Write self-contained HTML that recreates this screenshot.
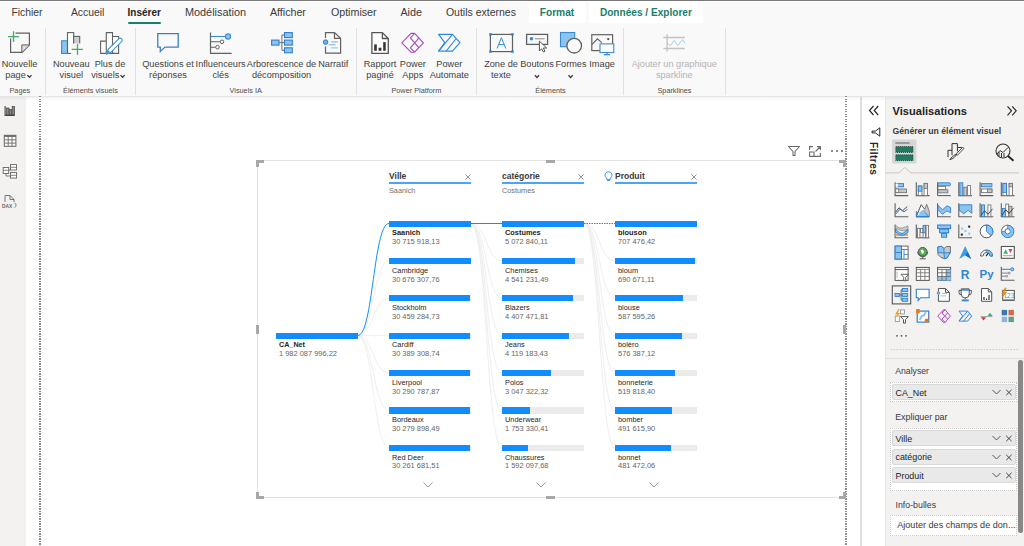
<!DOCTYPE html><html><head><meta charset="utf-8"><style>
html,body{margin:0;padding:0;}
body{width:1024px;height:546px;overflow:hidden;position:relative;background:#f9f9f9;font-family:"Liberation Sans",sans-serif;}
.t{position:absolute;white-space:nowrap;line-height:1;}
.r{position:absolute;}
.s{position:absolute;overflow:visible;}
</style></head><body>

<div class="r" style="left:0px;top:0px;width:1024px;height:1px;background:#7a7a7a;"></div>
<div class="r" style="left:0px;top:1px;width:1024px;height:1px;background:#ffffff;"></div>
<div class="r" style="left:529px;top:2px;width:57px;height:21px;background:#ffffff;"></div>
<div class="r" style="left:589px;top:2px;width:114px;height:21px;background:#ffffff;"></div>
<div class="t" style="left:11.40px;top:7.74px;font-size:10.35px;color:#3b3a39;font-weight:normal;">Fichier</div>
<div class="t" style="left:70.90px;top:7.70px;font-size:10.4px;color:#3b3a39;font-weight:normal;">Accueil</div>
<div class="t" style="left:127.60px;top:8.04px;font-size:10.0px;color:#252423;font-weight:bold;">Insérer</div>
<div class="t" style="left:184.90px;top:6.97px;font-size:10.9px;color:#3b3a39;font-weight:normal;">Modélisation</div>
<div class="t" style="left:269.90px;top:7.14px;font-size:10.7px;color:#3b3a39;font-weight:normal;">Afficher</div>
<div class="t" style="left:330.90px;top:7.14px;font-size:10.7px;color:#3b3a39;font-weight:normal;">Optimiser</div>
<div class="t" style="left:400.40px;top:7.06px;font-size:10.8px;color:#3b3a39;font-weight:normal;">Aide</div>
<div class="t" style="left:445.90px;top:7.31px;font-size:10.5px;color:#3b3a39;font-weight:normal;">Outils externes</div>
<div class="t" style="left:539.70px;top:7.87px;font-size:10.2px;color:#1c7d6b;font-weight:bold;">Format</div>
<div class="t" style="left:599.90px;top:7.95px;font-size:10.1px;color:#1c7d6b;font-weight:bold;">Données / Explorer</div>
<div class="r" style="left:128px;top:22px;width:33px;height:2px;background:#1b7f6b;border-radius:1px;"></div>
<div class="r" style="left:45px;top:28px;width:1px;height:67px;background:#e1e1e1;"></div>
<div class="r" style="left:135px;top:28px;width:1px;height:67px;background:#e1e1e1;"></div>
<div class="r" style="left:356px;top:28px;width:1px;height:67px;background:#e1e1e1;"></div>
<div class="r" style="left:476px;top:28px;width:1px;height:67px;background:#e1e1e1;"></div>
<div class="r" style="left:623px;top:28px;width:1px;height:67px;background:#e1e1e1;"></div>
<div class="r" style="left:725px;top:28px;width:1px;height:67px;background:#e1e1e1;"></div>
<div class="t" style="left:-280.50px;width:600px;text-align:center;top:59.51px;font-size:9.2px;color:#424242;font-weight:normal;">Nouvelle</div>
<div class="t" style="left:-228.70px;width:600px;text-align:center;top:59.51px;font-size:9.2px;color:#424242;font-weight:normal;">Nouveau</div>
<div class="t" style="left:-228.70px;width:600px;text-align:center;top:71.01px;font-size:9.2px;color:#424242;font-weight:normal;">visuel</div>
<div class="t" style="left:-190.00px;width:600px;text-align:center;top:59.51px;font-size:9.2px;color:#424242;font-weight:normal;">Plus de</div>
<div class="t" style="left:-132.00px;width:600px;text-align:center;top:59.51px;font-size:9.2px;color:#424242;font-weight:normal;">Questions et</div>
<div class="t" style="left:-132.00px;width:600px;text-align:center;top:71.01px;font-size:9.2px;color:#424242;font-weight:normal;">réponses</div>
<div class="t" style="left:-79.40px;width:600px;text-align:center;top:59.51px;font-size:9.2px;color:#424242;font-weight:normal;">Influenceurs</div>
<div class="t" style="left:-79.40px;width:600px;text-align:center;top:71.01px;font-size:9.2px;color:#424242;font-weight:normal;">clés</div>
<div class="t" style="left:-18.50px;width:600px;text-align:center;top:59.51px;font-size:9.2px;color:#424242;font-weight:normal;">Arborescence de</div>
<div class="t" style="left:-18.50px;width:600px;text-align:center;top:71.01px;font-size:9.2px;color:#424242;font-weight:normal;">décomposition</div>
<div class="t" style="left:33.30px;width:600px;text-align:center;top:59.51px;font-size:9.2px;color:#424242;font-weight:normal;">Narratif</div>
<div class="t" style="left:80.00px;width:600px;text-align:center;top:59.51px;font-size:9.2px;color:#424242;font-weight:normal;">Rapport</div>
<div class="t" style="left:80.00px;width:600px;text-align:center;top:71.01px;font-size:9.2px;color:#424242;font-weight:normal;">paginé</div>
<div class="t" style="left:112.80px;width:600px;text-align:center;top:59.51px;font-size:9.2px;color:#424242;font-weight:normal;">Power</div>
<div class="t" style="left:112.80px;width:600px;text-align:center;top:71.01px;font-size:9.2px;color:#424242;font-weight:normal;">Apps</div>
<div class="t" style="left:149.30px;width:600px;text-align:center;top:59.51px;font-size:9.2px;color:#424242;font-weight:normal;">Power</div>
<div class="t" style="left:149.30px;width:600px;text-align:center;top:71.01px;font-size:9.2px;color:#424242;font-weight:normal;">Automate</div>
<div class="t" style="left:201.00px;width:600px;text-align:center;top:59.51px;font-size:9.2px;color:#424242;font-weight:normal;">Zone de</div>
<div class="t" style="left:201.00px;width:600px;text-align:center;top:71.01px;font-size:9.2px;color:#424242;font-weight:normal;">texte</div>
<div class="t" style="left:237.00px;width:600px;text-align:center;top:59.51px;font-size:9.2px;color:#424242;font-weight:normal;">Boutons</div>
<div class="t" style="left:271.00px;width:600px;text-align:center;top:59.51px;font-size:9.2px;color:#424242;font-weight:normal;">Formes</div>
<div class="t" style="left:302.10px;width:600px;text-align:center;top:59.51px;font-size:9.2px;color:#424242;font-weight:normal;">Image</div>
<div class="t" style="left:5.30px;top:71.01px;font-size:9.2px;color:#424242;font-weight:normal;">page</div>
<div class="t" style="left:91.20px;top:71.01px;font-size:9.2px;color:#424242;font-weight:normal;">visuels</div>
<div class="t" style="left:374.30px;width:600px;text-align:center;top:59.51px;font-size:9.2px;color:#b3b3b3;font-weight:normal;">Ajouter un graphique</div>
<div class="t" style="left:374.30px;width:600px;text-align:center;top:71.01px;font-size:9.2px;color:#b3b3b3;font-weight:normal;">sparkline</div>
<div class="t" style="left:-280.20px;width:600px;text-align:center;top:87.12px;font-size:7.3px;color:#4d4d4d;font-weight:normal;">Pages</div>
<div class="t" style="left:-209.60px;width:600px;text-align:center;top:87.12px;font-size:7.3px;color:#4d4d4d;font-weight:normal;">Éléments visuels</div>
<div class="t" style="left:-54.30px;width:600px;text-align:center;top:87.12px;font-size:7.3px;color:#4d4d4d;font-weight:normal;">Visuels IA</div>
<div class="t" style="left:116.40px;width:600px;text-align:center;top:87.12px;font-size:7.3px;color:#4d4d4d;font-weight:normal;">Power Platform</div>
<div class="t" style="left:250.50px;width:600px;text-align:center;top:87.12px;font-size:7.3px;color:#4d4d4d;font-weight:normal;">Éléments</div>
<div class="t" style="left:374.50px;width:600px;text-align:center;top:87.12px;font-size:7.3px;color:#4d4d4d;font-weight:normal;">Sparklines</div>
<div class="r" style="left:0px;top:96px;width:26px;height:450px;background:#f3f2f1;"></div>
<div class="r" style="left:26px;top:96px;width:834px;height:450px;background:#ffffff;"></div>
<div class="r" style="left:860px;top:96px;width:2px;height:450px;background:#e1dfdd;"></div>
<div class="r" style="left:862px;top:96px;width:23px;height:450px;background:#ffffff;"></div>
<div class="r" style="left:885px;top:96px;width:139px;height:450px;background:#f3f2f1;"></div>
<div class="r" style="left:885px;top:96px;width:1px;height:450px;background:#e6e5e4;"></div>
<div class="r" style="left:0px;top:96px;width:1024px;height:1px;background:#e6e6e6;"></div>
<div class="r" style="left:0;top:97px;width:1024px;height:4px;background:linear-gradient(rgba(0,0,0,0.045),rgba(0,0,0,0));"></div>
<div class="r" style="left:39px;top:96px;width:2px;height:450px;background:repeating-linear-gradient(to bottom,#8c8c8c 0,#8c8c8c 1.1px,#ffffff 1.1px,#ffffff 2.5px);"></div>
<div class="r" style="left:845px;top:96px;width:2px;height:450px;background:repeating-linear-gradient(to bottom,#8c8c8c 0,#8c8c8c 1.1px,#ffffff 1.1px,#ffffff 2.5px);"></div>
<div class="r" style="left:257px;top:160px;width:589px;height:1px;background:#e3e3e3;"></div>
<div class="r" style="left:257px;top:497px;width:589px;height:1px;background:#e3e3e3;"></div>
<div class="r" style="left:257px;top:160px;width:1px;height:338px;background:#e3e3e3;"></div>
<div class="r" style="left:256px;top:160px;width:8px;height:3px;background:#a8a8a8;"></div>
<div class="r" style="left:256px;top:160px;width:3px;height:7px;background:#a8a8a8;"></div>
<div class="r" style="left:256px;top:496px;width:8px;height:3px;background:#a8a8a8;"></div>
<div class="r" style="left:256px;top:492px;width:3px;height:7px;background:#a8a8a8;"></div>
<div class="r" style="left:839px;top:496px;width:7px;height:3px;background:#a8a8a8;"></div>
<div class="r" style="left:843px;top:492px;width:3px;height:7px;background:#a8a8a8;"></div>
<div class="r" style="left:839px;top:160px;width:7px;height:3px;background:#a8a8a8;"></div>
<div class="r" style="left:843px;top:160px;width:3px;height:7px;background:#a8a8a8;"></div>
<div class="r" style="left:546px;top:160px;width:9px;height:3px;background:#a8a8a8;"></div>
<div class="r" style="left:546px;top:496px;width:9px;height:3px;background:#a8a8a8;"></div>
<div class="r" style="left:256px;top:325px;width:3px;height:9px;background:#a8a8a8;"></div>
<div class="r" style="left:843px;top:325px;width:3px;height:9px;background:#a8a8a8;"></div>
<svg class="s" style="left:787px;top:145px;" width="14" height="12" viewBox="0 0 14 12"><path d="M1.5 1.5 H12.5 L8 6.5 V10.5 H6 V6.5 Z" fill="none" stroke="#6b6b6b" stroke-width="1.1" stroke-linejoin="round"/></svg>
<svg class="s" style="left:809px;top:146px;" width="13" height="11" viewBox="0 0 13 11"><path d="M0.6 4 V0.6 H4 M8 0.6 H11.4 V4 M11.4 7 V10.4 H0.6 V6 H5 V10.4 M6.5 5.5 L11 1" fill="none" stroke="#6b6b6b" stroke-width="1.1"/></svg>
<div class="r" style="left:831px;top:150px;width:1.6px;height:1.6px;background:#666;border-radius:1px;"></div>
<div class="r" style="left:836px;top:150px;width:1.6px;height:1.6px;background:#666;border-radius:1px;"></div>
<div class="r" style="left:841px;top:150px;width:1.6px;height:1.6px;background:#666;border-radius:1px;"></div>
<div class="t" style="left:389.00px;top:171.80px;font-size:8.5px;color:#3b3a39;font-weight:bold;">Ville</div>
<div class="r" style="left:389px;top:182px;width:82px;height:2px;background:#4ba4f5;"></div>
<svg class="s" style="left:465px;top:173.5px;" width="6" height="6" viewBox="0 0 6 6"><path d="M0.4 0.4 L5.6 5.6 M5.6 0.4 L0.4 5.6" stroke="#8a8a8a" stroke-width="0.9"/></svg>
<div class="t" style="left:389.00px;top:186.52px;font-size:7.3px;color:#707070;font-weight:normal;">Saanich</div>
<div class="t" style="left:502.00px;top:171.80px;font-size:8.5px;color:#3b3a39;font-weight:bold;">catégorie</div>
<div class="r" style="left:502px;top:182px;width:82px;height:2px;background:#4ba4f5;"></div>
<svg class="s" style="left:578px;top:173.5px;" width="6" height="6" viewBox="0 0 6 6"><path d="M0.4 0.4 L5.6 5.6 M5.6 0.4 L0.4 5.6" stroke="#8a8a8a" stroke-width="0.9"/></svg>
<div class="t" style="left:502.00px;top:186.52px;font-size:7.3px;color:#707070;font-weight:normal;">Costumes</div>
<div class="t" style="left:615.00px;top:171.80px;font-size:8.5px;color:#3b3a39;font-weight:bold;">Produit</div>
<div class="r" style="left:615px;top:182px;width:82px;height:2px;background:#4ba4f5;"></div>
<svg class="s" style="left:691px;top:173.5px;" width="6" height="6" viewBox="0 0 6 6"><path d="M0.4 0.4 L5.6 5.6 M5.6 0.4 L0.4 5.6" stroke="#8a8a8a" stroke-width="0.9"/></svg>
<svg class="s" style="left:604px;top:171px;" width="9" height="10" viewBox="0 0 9 10"><path d="M4.5 0.8 C2.3 0.8 1 2.4 1 4.2 C1 5.6 2 6.4 2.6 7.2 V8.4 H6.4 V7.2 C7 6.4 8 5.6 8 4.2 C8 2.4 6.7 0.8 4.5 0.8 Z M3 9.4 H6" fill="none" stroke="#3a96f0" stroke-width="1"/></svg>
<svg class="s" style="left:0;top:0" width="1024" height="546" viewBox="0 0 1024 546"><path d="M357.6 335.6 C373.3 335.6 373.3 260.88 389 260.88" fill="none" stroke="#efefef" stroke-width="1"/><path d="M471 223.5 C486.5 223.5 486.5 260.88 502 260.88" fill="none" stroke="#efefef" stroke-width="1"/><path d="M584 223.5 C599.5 223.5 599.5 260.88 615 260.88" fill="none" stroke="#efefef" stroke-width="1"/><path d="M357.6 335.6 C373.3 335.6 373.3 298.26 389 298.26" fill="none" stroke="#efefef" stroke-width="1"/><path d="M471 223.5 C486.5 223.5 486.5 298.26 502 298.26" fill="none" stroke="#efefef" stroke-width="1"/><path d="M584 223.5 C599.5 223.5 599.5 298.26 615 298.26" fill="none" stroke="#efefef" stroke-width="1"/><path d="M357.6 335.6 C373.3 335.6 373.3 335.64 389 335.64" fill="none" stroke="#efefef" stroke-width="1"/><path d="M471 223.5 C486.5 223.5 486.5 335.64 502 335.64" fill="none" stroke="#efefef" stroke-width="1"/><path d="M584 223.5 C599.5 223.5 599.5 335.64 615 335.64" fill="none" stroke="#efefef" stroke-width="1"/><path d="M357.6 335.6 C373.3 335.6 373.3 373.02 389 373.02" fill="none" stroke="#efefef" stroke-width="1"/><path d="M471 223.5 C486.5 223.5 486.5 373.02 502 373.02" fill="none" stroke="#efefef" stroke-width="1"/><path d="M584 223.5 C599.5 223.5 599.5 373.02 615 373.02" fill="none" stroke="#efefef" stroke-width="1"/><path d="M357.6 335.6 C373.3 335.6 373.3 410.4 389 410.4" fill="none" stroke="#efefef" stroke-width="1"/><path d="M471 223.5 C486.5 223.5 486.5 410.4 502 410.4" fill="none" stroke="#efefef" stroke-width="1"/><path d="M584 223.5 C599.5 223.5 599.5 410.4 615 410.4" fill="none" stroke="#efefef" stroke-width="1"/><path d="M357.6 335.6 C373.3 335.6 373.3 447.78000000000003 389 447.78000000000003" fill="none" stroke="#efefef" stroke-width="1"/><path d="M471 223.5 C486.5 223.5 486.5 447.78000000000003 502 447.78000000000003" fill="none" stroke="#efefef" stroke-width="1"/><path d="M584 223.5 C599.5 223.5 599.5 447.78000000000003 615 447.78000000000003" fill="none" stroke="#efefef" stroke-width="1"/><path d="M357.6 335.6 C373.3 335.6 373.3 223.5 389 223.5" fill="none" stroke="#118dff" stroke-width="1"/><path d="M471 223.5 H502" stroke="#118dff" stroke-width="1"/><path d="M584 223.5 H615" stroke="#118dff" stroke-width="1" stroke-dasharray="1.5 1"/></svg>
<div class="r" style="left:275.5px;top:332.6px;width:82px;height:6.3px;background:#118dff;"></div>
<div class="t" style="left:279.00px;top:341.21px;font-size:7.2px;color:#252423;font-weight:bold;">CA_Net</div>
<div class="t" style="left:279.00px;top:349.89px;font-size:7.45px;color:#666666;font-weight:normal;">1 982 087 996,22</div>
<div class="r" style="left:389px;top:220.5px;width:82px;height:6.2px;background:#ebebeb;"></div>
<div class="r" style="left:389px;top:220.5px;width:82.0px;height:6.2px;background:#118dff;"></div>
<div class="t" style="left:392.00px;top:229.24px;font-size:7.4px;color:#252423;font-weight:bold;">Saanich</div>
<div class="t" style="left:392.00px;top:238.19px;font-size:7.45px;color:#666666;font-weight:normal;">30 715 918,13</div>
<div class="r" style="left:389px;top:257.88px;width:82px;height:6.2px;background:#ebebeb;"></div>
<div class="r" style="left:389px;top:257.88px;width:81.9px;height:6.2px;background:#118dff;"></div>
<div class="t" style="left:392.00px;top:266.62px;font-size:7.4px;color:#252423;font-weight:normal;">Cambridge</div>
<div class="t" style="left:392.00px;top:275.57px;font-size:7.45px;color:#666666;font-weight:normal;">30 676 307,76</div>
<div class="r" style="left:389px;top:295.26px;width:82px;height:6.2px;background:#ebebeb;"></div>
<div class="r" style="left:389px;top:295.26px;width:81.3px;height:6.2px;background:#118dff;"></div>
<div class="t" style="left:392.00px;top:304.00px;font-size:7.4px;color:#252423;font-weight:normal;">Stockholm</div>
<div class="t" style="left:392.00px;top:312.95px;font-size:7.45px;color:#666666;font-weight:normal;">30 459 284,73</div>
<div class="r" style="left:389px;top:332.64px;width:82px;height:6.2px;background:#ebebeb;"></div>
<div class="r" style="left:389px;top:332.64px;width:81.1px;height:6.2px;background:#118dff;"></div>
<div class="t" style="left:392.00px;top:341.38px;font-size:7.4px;color:#252423;font-weight:normal;">Cardiff</div>
<div class="t" style="left:392.00px;top:350.33px;font-size:7.45px;color:#666666;font-weight:normal;">30 389 308,74</div>
<div class="r" style="left:389px;top:370.02px;width:82px;height:6.2px;background:#ebebeb;"></div>
<div class="r" style="left:389px;top:370.02px;width:80.9px;height:6.2px;background:#118dff;"></div>
<div class="t" style="left:392.00px;top:378.76px;font-size:7.4px;color:#252423;font-weight:normal;">Liverpool</div>
<div class="t" style="left:392.00px;top:387.71px;font-size:7.45px;color:#666666;font-weight:normal;">30 290 787,87</div>
<div class="r" style="left:389px;top:407.4px;width:82px;height:6.2px;background:#ebebeb;"></div>
<div class="r" style="left:389px;top:407.4px;width:80.8px;height:6.2px;background:#118dff;"></div>
<div class="t" style="left:392.00px;top:416.14px;font-size:7.4px;color:#252423;font-weight:normal;">Bordeaux</div>
<div class="t" style="left:392.00px;top:425.09px;font-size:7.45px;color:#666666;font-weight:normal;">30 279 898,49</div>
<div class="r" style="left:389px;top:444.78000000000003px;width:82px;height:6.2px;background:#ebebeb;"></div>
<div class="r" style="left:389px;top:444.78000000000003px;width:80.8px;height:6.2px;background:#118dff;"></div>
<div class="t" style="left:392.00px;top:453.52px;font-size:7.4px;color:#252423;font-weight:normal;">Red Deer</div>
<div class="t" style="left:392.00px;top:462.47px;font-size:7.45px;color:#666666;font-weight:normal;">30 261 681,51</div>
<div class="r" style="left:502px;top:220.5px;width:82px;height:6.2px;background:#ebebeb;"></div>
<div class="r" style="left:502px;top:220.5px;width:82.0px;height:6.2px;background:#118dff;"></div>
<div class="t" style="left:505.00px;top:229.24px;font-size:7.4px;color:#252423;font-weight:bold;">Costumes</div>
<div class="t" style="left:505.00px;top:238.19px;font-size:7.45px;color:#666666;font-weight:normal;">5 072 840,11</div>
<div class="r" style="left:502px;top:257.88px;width:82px;height:6.2px;background:#ebebeb;"></div>
<div class="r" style="left:502px;top:257.88px;width:73.4px;height:6.2px;background:#118dff;"></div>
<div class="t" style="left:505.00px;top:266.62px;font-size:7.4px;color:#252423;font-weight:normal;">Chemises</div>
<div class="t" style="left:505.00px;top:275.57px;font-size:7.45px;color:#666666;font-weight:normal;">4 541 231,49</div>
<div class="r" style="left:502px;top:295.26px;width:82px;height:6.2px;background:#ebebeb;"></div>
<div class="r" style="left:502px;top:295.26px;width:71.3px;height:6.2px;background:#118dff;"></div>
<div class="t" style="left:505.00px;top:304.00px;font-size:7.4px;color:#252423;font-weight:normal;">Blazers</div>
<div class="t" style="left:505.00px;top:312.95px;font-size:7.45px;color:#666666;font-weight:normal;">4 407 471,81</div>
<div class="r" style="left:502px;top:332.64px;width:82px;height:6.2px;background:#ebebeb;"></div>
<div class="r" style="left:502px;top:332.64px;width:66.6px;height:6.2px;background:#118dff;"></div>
<div class="t" style="left:505.00px;top:341.38px;font-size:7.4px;color:#252423;font-weight:normal;">Jeans</div>
<div class="t" style="left:505.00px;top:350.33px;font-size:7.45px;color:#666666;font-weight:normal;">4 119 183,43</div>
<div class="r" style="left:502px;top:370.02px;width:82px;height:6.2px;background:#ebebeb;"></div>
<div class="r" style="left:502px;top:370.02px;width:49.3px;height:6.2px;background:#118dff;"></div>
<div class="t" style="left:505.00px;top:378.76px;font-size:7.4px;color:#252423;font-weight:normal;">Polos</div>
<div class="t" style="left:505.00px;top:387.71px;font-size:7.45px;color:#666666;font-weight:normal;">3 047 322,32</div>
<div class="r" style="left:502px;top:407.4px;width:82px;height:6.2px;background:#ebebeb;"></div>
<div class="r" style="left:502px;top:407.4px;width:28.3px;height:6.2px;background:#118dff;"></div>
<div class="t" style="left:505.00px;top:416.14px;font-size:7.4px;color:#252423;font-weight:normal;">Underwear</div>
<div class="t" style="left:505.00px;top:425.09px;font-size:7.45px;color:#666666;font-weight:normal;">1 753 330,41</div>
<div class="r" style="left:502px;top:444.78000000000003px;width:82px;height:6.2px;background:#ebebeb;"></div>
<div class="r" style="left:502px;top:444.78000000000003px;width:25.7px;height:6.2px;background:#118dff;"></div>
<div class="t" style="left:505.00px;top:453.52px;font-size:7.4px;color:#252423;font-weight:normal;">Chaussures</div>
<div class="t" style="left:505.00px;top:462.47px;font-size:7.45px;color:#666666;font-weight:normal;">1 592 097,68</div>
<div class="r" style="left:615px;top:220.5px;width:82px;height:6.2px;background:#ebebeb;"></div>
<div class="r" style="left:615px;top:220.5px;width:82.0px;height:6.2px;background:#118dff;"></div>
<div class="t" style="left:618.00px;top:229.24px;font-size:7.4px;color:#252423;font-weight:bold;">blouson</div>
<div class="t" style="left:618.00px;top:238.19px;font-size:7.45px;color:#666666;font-weight:normal;">707 476,42</div>
<div class="r" style="left:615px;top:257.88px;width:82px;height:6.2px;background:#ebebeb;"></div>
<div class="r" style="left:615px;top:257.88px;width:80.0px;height:6.2px;background:#118dff;"></div>
<div class="t" style="left:618.00px;top:266.62px;font-size:7.4px;color:#252423;font-weight:normal;">bloum</div>
<div class="t" style="left:618.00px;top:275.57px;font-size:7.45px;color:#666666;font-weight:normal;">690 671,11</div>
<div class="r" style="left:615px;top:295.26px;width:82px;height:6.2px;background:#ebebeb;"></div>
<div class="r" style="left:615px;top:295.26px;width:68.1px;height:6.2px;background:#118dff;"></div>
<div class="t" style="left:618.00px;top:304.00px;font-size:7.4px;color:#252423;font-weight:normal;">blouse</div>
<div class="t" style="left:618.00px;top:312.95px;font-size:7.45px;color:#666666;font-weight:normal;">587 595,26</div>
<div class="r" style="left:615px;top:332.64px;width:82px;height:6.2px;background:#ebebeb;"></div>
<div class="r" style="left:615px;top:332.64px;width:66.8px;height:6.2px;background:#118dff;"></div>
<div class="t" style="left:618.00px;top:341.38px;font-size:7.4px;color:#252423;font-weight:normal;">boléro</div>
<div class="t" style="left:618.00px;top:350.33px;font-size:7.45px;color:#666666;font-weight:normal;">576 387,12</div>
<div class="r" style="left:615px;top:370.02px;width:82px;height:6.2px;background:#ebebeb;"></div>
<div class="r" style="left:615px;top:370.02px;width:60.3px;height:6.2px;background:#118dff;"></div>
<div class="t" style="left:618.00px;top:378.76px;font-size:7.4px;color:#252423;font-weight:normal;">bonneterie</div>
<div class="t" style="left:618.00px;top:387.71px;font-size:7.45px;color:#666666;font-weight:normal;">519 818,40</div>
<div class="r" style="left:615px;top:407.4px;width:82px;height:6.2px;background:#ebebeb;"></div>
<div class="r" style="left:615px;top:407.4px;width:57.0px;height:6.2px;background:#118dff;"></div>
<div class="t" style="left:618.00px;top:416.14px;font-size:7.4px;color:#252423;font-weight:normal;">bomber</div>
<div class="t" style="left:618.00px;top:425.09px;font-size:7.45px;color:#666666;font-weight:normal;">491 615,90</div>
<div class="r" style="left:615px;top:444.78000000000003px;width:82px;height:6.2px;background:#ebebeb;"></div>
<div class="r" style="left:615px;top:444.78000000000003px;width:55.8px;height:6.2px;background:#118dff;"></div>
<div class="t" style="left:618.00px;top:453.52px;font-size:7.4px;color:#252423;font-weight:normal;">bonnet</div>
<div class="t" style="left:618.00px;top:462.47px;font-size:7.45px;color:#666666;font-weight:normal;">481 472,06</div>
<svg class="s" style="left:422.5px;top:481.5px;" width="10" height="6" viewBox="0 0 10 6"><path d="M0.5 0.5 L5 5 L9.5 0.5" fill="none" stroke="#999" stroke-width="1"/></svg>
<svg class="s" style="left:535.5px;top:481.5px;" width="10" height="6" viewBox="0 0 10 6"><path d="M0.5 0.5 L5 5 L9.5 0.5" fill="none" stroke="#999" stroke-width="1"/></svg>
<svg class="s" style="left:648.5px;top:481.5px;" width="10" height="6" viewBox="0 0 10 6"><path d="M0.5 0.5 L5 5 L9.5 0.5" fill="none" stroke="#999" stroke-width="1"/></svg>
<svg class="s" style="left:0;top:0" width="1024" height="546" viewBox="0 0 1024 546"><path d="M15.5 33.2 H29.4 V44.9 L22.2 52.4 H10.6 V38.5" fill="none" stroke="#616161" stroke-width="1.2"/><path d="M21.8 52 V44.9 H29.2" fill="#dcdcdc" stroke="#616161" stroke-width="1"/><path d="M8.1 36.7 H19.1 M13.5 31.3 V42.1" stroke="#47a865" stroke-width="1.3"/><rect x="61.6" y="40.8" width="5.9" height="12.6" fill="#8cc4f0" stroke="#3a8ad6" stroke-width="1.1"/><rect x="67.5" y="32.6" width="6.2" height="20.8" fill="#fff" stroke="#616161" stroke-width="1.1"/><rect x="73.7" y="36.4" width="6" height="17" fill="#cfcfcf" stroke="#616161" stroke-width="1.1"/><rect x="71" y="43.5" width="12.5" height="11.5" fill="#f9f9f9"/><path d="M71.6 49.3 H82.9 M77.5 43.9 V54.7" stroke="#47a865" stroke-width="1.3"/><path d="M100.6 53.4 V41.1 H106.3 V32.6 H112.5 V36.5 H118.6 V53.4 Z M106.3 41.1 V53.4 M112.5 36.5 V53.4" fill="#fff" stroke="#616161" stroke-width="1.1"/><path d="M106.5 54.3 L108 49.5 L118.8 38.8 A1.9 1.9 0 0 1 121.6 41.6 L110.8 52.3 Z" fill="#fff" stroke="#3a9ad9" stroke-width="1.1" stroke-linejoin="round"/><path d="M106.6 54.2 L108.2 50.2 L110.3 52.3 Z" fill="#3a9ad9"/><path d="M157.8 33.6 H178.2 V47.1 H165 L160.3 51.6 V47.1 H157.8 Z" fill="none" stroke="#3d7fc1" stroke-width="1.3" stroke-linejoin="miter"/><path d="M210.5 32.4 V53.4 H231.6" fill="none" stroke="#616161" stroke-width="1.2"/><path d="M210.5 36.5 H225.4" stroke="#3a8ad6" stroke-width="1.1"/><circle cx="228" cy="36.5" r="2.6" fill="#8cc4f0" stroke="#3a8ad6" stroke-width="1.1"/><path d="M210.5 41.8 H220.2 M210.5 47.2 H215.7" stroke="#616161" stroke-width="1.1"/><circle cx="222" cy="41.8" r="1.8" fill="#fff" stroke="#616161" stroke-width="1"/><circle cx="217.5" cy="47.2" r="1.8" fill="#fff" stroke="#616161" stroke-width="1"/><path d="M279.1 42.6 H284 M281.9 35 V50.3 M281.9 35 H284 M281.9 50.3 H284" fill="none" stroke="#707070" stroke-width="1"/><rect x="271.6" y="40.1" width="7.4" height="5" fill="#8cc4f0" stroke="#2f7fcf" stroke-width="1.1"/><rect x="284.5" y="32.6" width="7.8" height="5" fill="#8cc4f0" stroke="#2f7fcf" stroke-width="1.1"/><rect x="284.5" y="40.1" width="7.8" height="5" fill="#8cc4f0" stroke="#2f7fcf" stroke-width="1.1"/><rect x="284.5" y="47.8" width="7.8" height="5" fill="#8cc4f0" stroke="#2f7fcf" stroke-width="1.1"/><path d="M325.5 38 V32.6 H334.5 L340.6 38.3 V53.1 H325.5 V46.5 M334.5 32.6 V38.3 H340.6" fill="none" stroke="#616161" stroke-width="1.2"/><circle cx="325.6" cy="42.1" r="2.3" fill="#6aaee6" stroke="#2f7fcf" stroke-width="1"/><path d="M331.1 41.7 H337.8 M328.6 44.8 H335.5 M331.1 47.9 H337.8" stroke="#9ccbed" stroke-width="1.4"/><path d="M371.9 32.6 H382.4 L388.3 38.5 V53.4 H371.9 Z M382.4 32.6 V38.5 H388.3" fill="#fff" stroke="#555" stroke-width="1.3" stroke-linejoin="round"/><rect x="374.2" y="44.4" width="2.6" height="6.4" fill="#333"/><rect x="378.6" y="47.7" width="2.8" height="3.1" fill="#333"/><rect x="383.2" y="42.1" width="2.5" height="8.7" fill="#333"/><path d="M411 33.4 L401.8 42.8 L411 52.2 H414.6 L423.4 42.8 L414.6 33.4 Z" fill="none" stroke="#a54bbf" stroke-width="1.1" stroke-linejoin="round"/><path d="M414.6 33.4 L410.4 37.8 L419 47.8 M414.6 52.2 L410.4 47.8 L419 37.8" fill="none" stroke="#a54bbf" stroke-width="1.1" stroke-linejoin="round"/><path d="M438.6 34.4 H452.5 L459.9 42.7 L452.5 51.1 H438.6 L444.8 42.7 Z" fill="none" stroke="#2f8be0" stroke-width="1.2" stroke-linejoin="round"/><path d="M452.5 34.4 L438.6 51.1 M456.2 38.5 L446.2 51.1" stroke="#2f8be0" stroke-width="1.1"/><rect x="490.4" y="34.4" width="22.1" height="17.2" fill="none" stroke="#616161" stroke-width="1.2"/><rect x="489.2" y="33.199999999999996" width="2.4" height="2.4" fill="#1e88e5"/><rect x="511.3" y="33.199999999999996" width="2.4" height="2.4" fill="#1e88e5"/><rect x="489.2" y="50.4" width="2.4" height="2.4" fill="#1e88e5"/><rect x="511.3" y="50.4" width="2.4" height="2.4" fill="#1e88e5"/><path d="M497.1 48.5 L501.4 37.7 L505.8 48.5 M498.7 44.6 H504.2" fill="none" stroke="#2f8be0" stroke-width="1"/><rect x="526.6" y="34.4" width="21" height="10" fill="none" stroke="#616161" stroke-width="1.3"/><circle cx="531.5" cy="38.8" r="1.8" fill="#2f8be0"/><path d="M535 38.8 H544.6" stroke="#888" stroke-width="1"/><path d="M539.4 41.1 V51 L541.6 48.7 L543.4 52 L545 51.2 L543.3 48 H546.7 Z" fill="#fff" stroke="#555" stroke-width="1" stroke-linejoin="round"/><rect x="560.5" y="32.5" width="14.2" height="14.2" fill="#8cc4f0" stroke="#3a8ad6" stroke-width="1.1"/><circle cx="574.2" cy="45.7" r="7.3" fill="#fafafa" stroke="#616161" stroke-width="1.3"/><rect x="591.8" y="34.7" width="20.8" height="15.9" fill="none" stroke="#616161" stroke-width="1.2"/><path d="M591.8 44.7 L597.4 38.8 L601.8 42.6" fill="none" stroke="#616161" stroke-width="1.2"/><circle cx="608.2" cy="39.1" r="1.1" fill="#444"/><rect x="600" y="43.9" width="13.8" height="8.6" fill="#fff" stroke="#3a8ad6" stroke-width="1.1"/><path d="M607 52.5 V54.4 M604 54.6 H610" stroke="#3a8ad6" stroke-width="1.1"/><path d="M667.1 34.2 V51.6 M663.4 37.5 H684.9 M663.4 48.5 H684.9" stroke="#c2c2c2" stroke-width="1.3"/><path d="M667.5 43.2 L670.3 45.7 L674.1 40.3 L677.8 45.7 L682.5 39.6 L685 43.5" fill="none" stroke="#a9cfe8" stroke-width="1"/><path d="M27.299999999999997 75.10000000000001 L29.4 77.30000000000001 L31.5 75.10000000000001" fill="none" stroke="#3b3b3b" stroke-width="1.3"/><path d="M120.5 75.10000000000001 L122.6 77.30000000000001 L124.69999999999999 75.10000000000001" fill="none" stroke="#3b3b3b" stroke-width="1.3"/><path d="M534.9 75.3 L537 77.5 L539.1 75.3" fill="none" stroke="#3b3b3b" stroke-width="1.3"/><path d="M568.5 75.3 L570.6 77.5 L572.7 75.3" fill="none" stroke="#3b3b3b" stroke-width="1.3"/><path d="M5.1 106 V115.4 H14.8" fill="none" stroke="#444" stroke-width="1.1"/><rect x="6.6" y="108" width="2.4" height="6.8" fill="#888" stroke="#444" stroke-width="0.7"/><rect x="9.6" y="109.6" width="2.2" height="5.2" fill="#888" stroke="#444" stroke-width="0.7"/><rect x="12.2" y="106.5" width="2.4" height="8.3" fill="#888" stroke="#444" stroke-width="0.7"/><rect x="4.3" y="135.3" width="11.6" height="11" fill="#fff" stroke="#666" stroke-width="1"/><rect x="4.3" y="135.3" width="11.6" height="1.6" fill="#666"/><path d="M8.2 136 V146.3 M12 136 V146.3 M4.3 139.8 H15.9 M4.3 143.1 H15.9" stroke="#666" stroke-width="0.9"/><rect x="3.2" y="167.5" width="5.5" height="6" fill="#fff" stroke="#666" stroke-width="0.9"/><rect x="10.5" y="164.6" width="6" height="5.4" fill="#fff" stroke="#666" stroke-width="0.9"/><rect x="10.5" y="172.5" width="6" height="5.6" fill="#fff" stroke="#666" stroke-width="0.9"/><path d="M8.7 170 H10.5 M6 173.5 V176 H10.5 M3.2 170.3 H8.7 M10.5 167.3 H16.5 M10.5 175.3 H16.5" fill="none" stroke="#666" stroke-width="0.8"/><path d="M5 202 V195.5 H10 L14 199.5 V202 M10 195.5 V199.5 H14" fill="none" stroke="#666" stroke-width="0.9"/><text x="2" y="207.5" font-family="Liberation Sans" font-size="4.8" fill="#666" font-weight="bold">DAX</text><path d="M14.5 203 A2.4 2.4 0 0 1 14.5 207.5" fill="none" stroke="#666" stroke-width="0.8"/></svg>
<svg class="s" style="left:0;top:0" width="1024" height="546" viewBox="0 0 1024 546"><path d="M873.5 106 L869.5 110.5 L873.5 115 M878.2 106 L874.2 110.5 L878.2 115" fill="none" stroke="#252423" stroke-width="1.15"/><path d="M879.8 127.8 V136.2 L875.4 132.9 H872 V131.1 H875.4 Z" fill="none" stroke="#252423" stroke-width="1" stroke-linejoin="round"/><path d="M1007.5 106.3 L1011.5 110.8 L1007.5 115.3 M1012.2 106.3 L1016.2 110.8 L1012.2 115.3" fill="none" stroke="#252423" stroke-width="1.15"/><rect x="892" y="139.6" width="24.5" height="24" rx="1.5" fill="#d6d6d6"/><path d="M895.4 143 H909.6" stroke="#707070" stroke-width="1.2"/><rect x="895.8" y="146.6" width="17.2" height="5.8" fill="#1d7a63" stroke="#333" stroke-width="0.9" stroke-dasharray="1 1"/><rect x="895.8" y="154.8" width="17.2" height="5.8" fill="#1d7a63" stroke="#333" stroke-width="0.9" stroke-dasharray="1 1"/><path d="M948 157.2 V150.3 H952 M952 155.2 V143.6 H957.4 V151.3 M957.4 147.5 H961.8" fill="none" stroke="#333" stroke-width="1"/><path d="M963.6 148.8 A0.9 0.9 0 0 0 962.3 147.6 L956.2 154 L957.4 155.2 Z" fill="#fff" stroke="#333" stroke-width="0.9" stroke-linejoin="round"/><path d="M956.6 154.4 C955.5 156.6 953.5 158.8 949.8 159.6 C951.2 157.6 953 156 955.2 154.6 Z" fill="#fff" stroke="#333" stroke-width="1" stroke-linejoin="round"/><circle cx="1003" cy="151" r="7" fill="none" stroke="#333" stroke-width="1.1"/><path d="M997 154 L1000 150.5 L1003 152.5 L1008 147.5 M999 156 V152 M1001.5 157 V153 M1004 157 V153" fill="none" stroke="#333" stroke-width="1"/><path d="M1008 156 L1013.5 160.8" stroke="#222" stroke-width="1.8"/><path d="M886 172.9 H898.6 L904.8 167.5 L911 172.9 H1019" fill="none" stroke="#c8c6c4" stroke-width="1"/><path d="M899.6 173 L904.8 168.6 L910 173 Z" fill="#f3f2f1"/><g transform="translate(894.5,182.2)"><path d="M0.6 0 V13.4 H13.8" fill="none" stroke="#5f5f5f" stroke-width="1.1"/><rect x="1.2" y="1.4" width="7.8" height="3.2" fill="#8cc4f0" stroke="#2f7fcf" stroke-width="0.9"/><rect x="1.2" y="1.4" width="2" height="3.2" fill="#fff"/><rect x="1.2" y="6.8" width="10.8" height="3.6" fill="#c8c8c8" stroke="#777" stroke-width="0.9"/><rect x="1.2" y="6.8" width="3" height="3.6" fill="#fff" stroke="#777" stroke-width="0.9"/></g><g transform="translate(915.7,182.2)"><path d="M0.6 0 V13.4 H13.8" fill="none" stroke="#5f5f5f" stroke-width="1.1"/><rect x="2.6" y="3.8" width="3.6" height="9.6" fill="#fff" stroke="#777" stroke-width="0.9"/><rect x="2.6" y="3.8" width="3.6" height="5.2" fill="#8cc4f0" stroke="#2f7fcf" stroke-width="0.9"/><rect x="8.4" y="1.2" width="3.4" height="12.2" fill="#fff" stroke="#777" stroke-width="0.9"/><rect x="8.4" y="1.2" width="3.4" height="5" fill="#c8c8c8" stroke="#777" stroke-width="0.9"/></g><g transform="translate(937,182.2)"><path d="M0.6 13.4 H13.8" stroke="#5f5f5f" stroke-width="1.1"/><rect x="0.8" y="0.6" width="12.6" height="3" rx="1" fill="#8cc4f0" stroke="#2f7fcf" stroke-width="0.9"/><rect x="0.8" y="4.2" width="7.8" height="3" fill="#fff" stroke="#777" stroke-width="0.9"/><rect x="0.8" y="7.6" width="10" height="3" fill="#c8c8c8" stroke="#777" stroke-width="0.9"/><path d="M0.6 0 V13.4" stroke="#5f5f5f" stroke-width="1"/></g><g transform="translate(958.2,182.2)"><path d="M0.6 0 V13.4 H13.8" fill="none" stroke="#5f5f5f" stroke-width="1.1"/><rect x="1.6" y="0.6" width="3" height="12.8" fill="#8cc4f0" stroke="#2f7fcf" stroke-width="0.9"/><rect x="5.6" y="5" width="3" height="8.4" fill="#c8c8c8" stroke="#777" stroke-width="0.9"/><rect x="9.4" y="3.4" width="3" height="10" fill="#fff" stroke="#777" stroke-width="0.9"/></g><g transform="translate(979.5,182.2)"><path d="M0.6 0 V13.4 H13.8" fill="none" stroke="#5f5f5f" stroke-width="1.1"/><rect x="2" y="1.4" width="10.4" height="3.2" fill="#8cc4f0" stroke="#2f7fcf" stroke-width="0.9"/><rect x="2" y="6.8" width="10.4" height="3.6" fill="#fff" stroke="#777" stroke-width="0.9"/><rect x="8" y="6.8" width="4.4" height="3.6" fill="#c8c8c8" stroke="#777" stroke-width="0.9"/></g><g transform="translate(1000.7,182.2)"><path d="M0.6 0 V13.4 H13.8" fill="none" stroke="#5f5f5f" stroke-width="1.1"/><rect x="2.2" y="1.2" width="3.6" height="12.2" fill="#fff" stroke="#777" stroke-width="0.9"/><rect x="2.2" y="1.2" width="3.6" height="9" fill="#8cc4f0" stroke="#2f7fcf" stroke-width="0.9"/><rect x="8.4" y="1.2" width="3.4" height="12.2" fill="#fff" stroke="#777" stroke-width="0.9"/><rect x="8.4" y="1.2" width="3.4" height="3.4" fill="#c8c8c8" stroke="#777" stroke-width="0.9"/></g><g transform="translate(894.5,203.3)"><path d="M0.6 0 V13.4 H13.8" fill="none" stroke="#5f5f5f" stroke-width="1.1"/><path d="M1 9 L4.5 4.5 L8 7.5 L12.8 3.2" fill="none" stroke="#444" stroke-width="1"/><path d="M1 11 L5.5 5.8 L9.5 8.5 L13 6" fill="none" stroke="#2f7fcf" stroke-width="1"/></g><g transform="translate(915.7,203.3)"><path d="M0.6 13.4 L5.5 1.5 L9 6 L11 1 L13.6 8 V13.4 Z" fill="#c8c8c8" stroke="#777" stroke-width="0.9"/><path d="M0.6 13.4 V8 L2.2 10 L7.5 6.5 L13 13.4 Z" fill="#8cc4f0" stroke="#2f7fcf" stroke-width="0.9"/><path d="M0.6 13.4 L5.5 1.5 L9 6" fill="#fff" stroke="#555" stroke-width="0.9"/><path d="M2.2 10 L7.5 6.5 L10 9.8" fill="#8cc4f0"/><path d="M0.4 13.4 H13.6" stroke="#2f7fcf" stroke-width="1.2"/></g><g transform="translate(937,203.3)"><path d="M0.6 0 V13.4 H13.8" fill="none" stroke="#5f5f5f" stroke-width="1.1"/><path d="M1 2 L5.5 6.5 L10 2.5 L13.6 4.2 V9.5 L10 7.5 L5.5 11 L1 6.5 Z" fill="#8cc4f0" stroke="#2f7fcf" stroke-width="0.9"/></g><g transform="translate(958.2,203.3)"><path d="M0.6 0 V13.4 H13.8" fill="none" stroke="#5f5f5f" stroke-width="1.1"/><path d="M1 1.5 H13.6 V10 L10 7 L5.5 10.5 L1 7 Z" fill="#8cc4f0" stroke="#2f7fcf" stroke-width="0.9"/></g><g transform="translate(979.5,203.3)"><path d="M0.6 0 V13.4 H13.8" fill="none" stroke="#5f5f5f" stroke-width="1.1"/><rect x="2" y="1.6" width="3" height="11.8" fill="#8cc4f0" stroke="#2f7fcf" stroke-width="0.9"/><rect x="8.4" y="1.6" width="3" height="11.8" fill="#fff" stroke="#777" stroke-width="0.9"/><path d="M1.5 12 L5 7.5 L8.5 11 L13 5.5" fill="none" stroke="#333" stroke-width="0.9"/></g><g transform="translate(1000.7,203.3)"><path d="M0.6 0 V13.4 H13.8" fill="none" stroke="#5f5f5f" stroke-width="1.1"/><rect x="1.6" y="5.2" width="3.4" height="8.2" fill="#8cc4f0" stroke="#2f7fcf" stroke-width="0.9"/><rect x="5" y="0.8" width="3" height="12.6" fill="#fff" stroke="#777" stroke-width="0.9"/><rect x="8.2" y="3" width="3" height="10.4" fill="#c8c8c8" stroke="#777" stroke-width="0.9"/><path d="M1.5 12 L5 6.5 L8.5 10 L13 4.5" fill="none" stroke="#333" stroke-width="0.9"/></g><g transform="translate(894.5,224.4)"><path d="M0.6 0 V13.4 H13.8" fill="none" stroke="#5f5f5f" stroke-width="1.1"/><path d="M1 1 L4.5 3.5 L8 3.5 L13.5 1.5 V5 L9 6.5 L4.5 5.5 L1 3.5Z" fill="#c8c8c8" stroke="#888" stroke-width="0.7"/><path d="M1 8.5 L4.5 10.5 L8.5 10.5 L13.5 9 V11.5 H1 Z" fill="#f2a23c"/><path d="M1 4.5 L5 8.5 L8.5 9 L13.5 5 V8 L9 10.8 L5 10.5 L1 7.5 Z" fill="#8cc4f0" stroke="#2f7fcf" stroke-width="1"/></g><g transform="translate(915.7,224.4)"><path d="M0.6 0 V13.4 H13.8" fill="none" stroke="#5f5f5f" stroke-width="1.1"/><rect x="1.8" y="4" width="2.4" height="9.4" fill="#fff" stroke="#777" stroke-width="0.9"/><rect x="4.8" y="4" width="2.4" height="4" fill="#fff" stroke="#777" stroke-width="0.9"/><rect x="7.4" y="1" width="2.4" height="7.5" fill="#8cc4f0" stroke="#2f7fcf" stroke-width="0.9"/><rect x="7.4" y="8.5" width="2.4" height="4.9" fill="#fff" stroke="#777" stroke-width="0.9"/><rect x="10.4" y="1" width="2.4" height="12.4" fill="#fff" stroke="#777" stroke-width="0.9"/></g><g transform="translate(937,224.4)"><rect x="0.6" y="0.6" width="13" height="3.6" fill="#8cc4f0" stroke="#2f7fcf" stroke-width="1"/><rect x="2.6" y="4.8" width="9" height="3.6" fill="#8cc4f0" stroke="#2f7fcf" stroke-width="1"/><rect x="4.6" y="9" width="5" height="3.8" fill="#8cc4f0" stroke="#2f7fcf" stroke-width="1"/></g><g transform="translate(958.2,224.4)"><path d="M0.6 0 V13.4 H13.8" fill="none" stroke="#5f5f5f" stroke-width="1.1"/><rect x="10" y="1.2" width="2" height="2" fill="#222"/><rect x="3" y="3.2" width="2" height="2" fill="#8cc4f0"/><rect x="6.2" y="5.6" width="2" height="2" fill="#8cc4f0"/><rect x="10" y="8.2" width="2" height="2" fill="#8cc4f0"/><rect x="2.6" y="9.2" width="2" height="2" fill="#222"/></g><g transform="translate(979.5,224.4)"><circle cx="7" cy="7" r="6.4" fill="#fff" stroke="#555" stroke-width="1"/><path d="M7 0.6 A6.4 6.4 0 0 1 11.6 11.4 L7 7 Z" fill="#8cc4f0" stroke="#2f7fcf" stroke-width="0.9"/></g><g transform="translate(1000.7,224.4)"><circle cx="7" cy="7" r="6.2" fill="#8cc4f0" stroke="#2f7fcf" stroke-width="1"/><path d="M0.8 7 A6.2 6.2 0 0 1 7 0.8 V4.4 A2.6 2.6 0 0 0 4.4 7 Z" fill="#fff" stroke="#777" stroke-width="0.9"/><circle cx="7" cy="7" r="2.6" fill="#fff" stroke="#2f7fcf" stroke-width="1"/></g><g transform="translate(894.5,245.5)"><rect x="0.6" y="0.6" width="13" height="13" fill="#fff" stroke="#666" stroke-width="1"/><rect x="0.6" y="0.6" width="6.4" height="13" fill="#8cc4f0" stroke="#2f7fcf" stroke-width="1"/><path d="M0.6 7 H7 M7 4 H13.6 M9.5 4 V13.6 M9.5 9 H13.6" fill="none" stroke="#2f7fcf" stroke-width="0.9"/></g><g transform="translate(915.7,245.5)"><circle cx="7" cy="6.3" r="4.4" fill="#4fae4f" stroke="#555" stroke-width="1"/><path d="M5 4.5 L7 4 L8.5 6 L7.2 8.5 L5.6 7.4 Z" fill="#fff"/><path d="M2 6.3 A5 5 0 0 0 12 6.3 M7 11.3 V13 M4 13.3 H10" fill="none" stroke="#555" stroke-width="1"/></g><g transform="translate(937,245.5)"><path d="M0.8 1.5 L4.5 0.8 L7 3 L9.5 1 L13.4 1 L13.4 7 L10 12.5 L7.5 13.2 L4 12 L1 9 Z" fill="#c8c8c8" stroke="#666" stroke-width="0.9"/><path d="M0.8 1.5 L4.5 0.8 L7 3 L7 7.5 L1 7 Z" fill="#8cc4f0" stroke="#2f7fcf" stroke-width="0.9"/><path d="M7 7.5 L13.4 7 L10 12.5 L7.5 13.2 Z" fill="#8cc4f0" stroke="#2f7fcf" stroke-width="0.9"/></g><g transform="translate(958.2,245.5)"><path d="M7 0.5 L13 13.5 L7 9.8 L1 13.5 Z" fill="#3f9ce0"/><path d="M7 9.8 L13 13.5 L9.5 6.5 Z" fill="#1769c4"/></g><g transform="translate(979.5,245.5)"><path d="M1 10.5 A6 6 0 0 1 13 10.5 H10.5 A3.5 3.5 0 0 0 3.5 10.5 Z" fill="#fff" stroke="#555" stroke-width="0.9"/><path d="M6.5 4.6 A6 6 0 0 1 13 10.5 H10.5 A3.5 3.5 0 0 0 7 7 Z" fill="#8cc4f0" stroke="#2f7fcf" stroke-width="0.9"/><path d="M6.5 10.5 L9 7.5" stroke="#333" stroke-width="1.2"/></g><g transform="translate(1000.7,245.5)"><rect x="0.6" y="1" width="13" height="11.8" fill="#fff" stroke="#555" stroke-width="1.1"/><path d="M2.6 8.2 L5 3.8 L7.4 8.2 Z" fill="#44b26b"/><path d="M7.6 3.6 L11.8 3.6 L9.7 7.8 Z" fill="#e0424f"/><path d="M2 10.2 H12" stroke="#999" stroke-width="0.9"/></g><g transform="translate(894.5,266.8)"><rect x="0.6" y="0.6" width="13" height="13" fill="#fff" stroke="#555" stroke-width="1"/><path d="M0.6 2.8 H13.6" stroke="#555" stroke-width="1"/><path d="M2.5 5 V11" stroke="#999" stroke-width="1.2" stroke-dasharray="1 0.8"/><path d="M6.5 7.5 H14 L11.2 10.5 V14 H9.2 V10.5 Z" fill="#fff" stroke="#555" stroke-width="0.9"/></g><g transform="translate(915.7,266.8)"><rect x="0.6" y="0.6" width="13" height="13" fill="#fff" stroke="#555" stroke-width="1"/><path d="M0.6 2.6 H13.6 M0.6 6 H13.6 M0.6 9.6 H13.6 M5 2.6 V13.6 M9.2 2.6 V13.6" stroke="#777" stroke-width="0.9"/></g><g transform="translate(937,266.8)"><rect x="0.6" y="0.6" width="13" height="13" fill="#fff" stroke="#555" stroke-width="1"/><rect x="9.2" y="2.6" width="4.4" height="11" fill="#8cc4f0"/><rect x="0.6" y="9.6" width="13" height="4" fill="#8cc4f0"/><path d="M0.6 2.6 H13.6 M0.6 6 H13.6 M0.6 9.6 H13.6 M5 2.6 V13.6 M9.2 2.6 V13.6" stroke="#666" stroke-width="0.9"/></g><g transform="translate(958.2,266.8)"><text x="7" y="12.2" text-anchor="middle" font-family="Liberation Sans" font-weight="bold" font-size="12" fill="#2f85d0">R</text></g><g transform="translate(979.5,266.8)"><text x="7" y="11" text-anchor="middle" font-family="Liberation Sans" font-weight="bold" font-size="11.5" fill="#2f85d0">Py</text></g><g transform="translate(1000.7,266.8)"><path d="M0.6 0 V13.4 H13.8" fill="none" stroke="#5f5f5f" stroke-width="1.1"/><path d="M0.6 2.5 H10" stroke="#2f7fcf" stroke-width="1"/><circle cx="11.5" cy="2.5" r="1.6" fill="#8cc4f0" stroke="#2f7fcf" stroke-width="0.9"/><path d="M0.6 6.3 H8 M0.6 9.4 H5.5" stroke="#777" stroke-width="0.9"/><circle cx="8.6" cy="6.3" r="0.9" fill="#fff" stroke="#777" stroke-width="0.8"/><circle cx="6" cy="9.4" r="0.9" fill="#fff" stroke="#777" stroke-width="0.8"/></g><g transform="translate(894.5,287.9)"><rect x="-2.2" y="-2" width="18.4" height="18" fill="none" stroke="#555" stroke-width="1.1"/><path d="M5 7 H7.8 M6.6 2 V12 H7.8 M6.6 2 H7.8" fill="none" stroke="#555" stroke-width="0.9"/><rect x="0.5" y="5.5" width="4.4" height="3" fill="#8cc4f0" stroke="#2f7fcf" stroke-width="0.9"/><rect x="7.8" y="0.6" width="5.4" height="3" fill="#8cc4f0" stroke="#2f7fcf" stroke-width="0.9"/><rect x="7.8" y="5.5" width="5.4" height="3" fill="#8cc4f0" stroke="#2f7fcf" stroke-width="0.9"/><rect x="7.8" y="10.4" width="5.4" height="3" fill="#8cc4f0" stroke="#2f7fcf" stroke-width="0.9"/></g><g transform="translate(915.7,287.9)"><path d="M0.6 1.3 H13.4 V9.8 H5 L2.5 12.6 V9.8 H0.6 Z" fill="#fff" stroke="#2f7fcf" stroke-width="1.1"/></g><g transform="translate(937,287.9)"><path d="M1.4 4 V0.6 H8.5 L12.4 4.5 V13.4 H1.4 V7 M8.5 0.6 V4.5 H12.4" fill="#fff" stroke="#555" stroke-width="1"/><circle cx="1.5" cy="5.2" r="1.3" fill="#8cc4f0" stroke="#2f7fcf" stroke-width="0.8"/><path d="M5 5.5 H10 M3.5 8 H9" stroke="#8cc4f0" stroke-width="1"/></g><g transform="translate(958.2,287.9)"><path d="M3 1 H11 V6 A4 4 0 0 1 3 6 Z" fill="#fff" stroke="#555" stroke-width="1"/><path d="M3 1 H11 V2.8 H3 Z" fill="#3a8ad6"/><path d="M3 2.5 H0.8 V4.5 A2.5 2.5 0 0 0 3.5 7 M11 2.5 H13.2 V4.5 A2.5 2.5 0 0 1 10.5 7 M7 10 V11.5" fill="none" stroke="#555" stroke-width="1"/><rect x="3.5" y="11.5" width="7" height="2" fill="#3a8ad6"/></g><g transform="translate(979.5,287.9)"><path d="M2 0.6 H8.8 L12.2 4 V13.4 H2 Z M8.8 0.6 V4 H12.2" fill="#fff" stroke="#555" stroke-width="1"/><path d="M4.5 12 V9 M7 12 V10.5 M9.5 12 V7" stroke="#333" stroke-width="1.2"/></g><g transform="translate(1000.7,287.9)"><rect x="2" y="2.5" width="11.6" height="10" fill="#fff" stroke="#555" stroke-width="1"/><text x="8.2" y="10" text-anchor="middle" font-family="Liberation Sans" font-size="6.5" fill="#3a9ad9">123</text><path d="M4.5 0 L1 5.5 H3.5 L1.5 9.5 L6 4 H3.5 L5.5 0 Z" fill="#f29b1d" stroke="#d4760a" stroke-width="0.5"/><path d="M2 11.5 H13.6" stroke="#999" stroke-width="1"/></g><g transform="translate(894.5,309.1)"><rect x="6" y="0.8" width="4" height="4" fill="#fff" stroke="#999" stroke-width="0.9"/><rect x="0.8" y="7" width="4" height="5.5" fill="#fff" stroke="#999" stroke-width="0.9"/><path d="M6 7.5 H13.8 L11 10.5 V14 H9 V10.5 Z" fill="#fff" stroke="#555" stroke-width="1"/><path d="M4 0 L0.5 5.5 H3 L1.2 9 L5.5 4 H3.2 L5 0 Z" fill="#f29b1d"/></g><g transform="translate(915.7,309.1)"><rect x="1.5" y="2" width="11.5" height="11" fill="#fff" stroke="#2f7fcf" stroke-width="1.2"/><path d="M4 11 L6 7 L8.5 6 L10 3" fill="none" stroke="#8cc4f0" stroke-width="2"/><path d="M0.5 0 H4 V3.5 L2.2 5.5 L0.5 3.5 Z" fill="#e57a16"/><circle cx="11" cy="11.5" r="2" fill="#e57a16"/><circle cx="13" cy="8" r="0.9" fill="#e57a16"/></g><g transform="translate(937,309.1)"><path d="M6.5 0.6 L0.8 7 L6.5 13.4 H8 L13.4 7 L8 0.6 Z M8 0.6 L5 4 L10.5 10 M8 13.4 L5 10 L10.5 4" fill="none" stroke="#a54bbf" stroke-width="1" stroke-linejoin="round"/></g><g transform="translate(958.2,309.1)"><path d="M0.8 2 H9.5 L13.5 7 L9.5 12 H0.8 L4.5 7 Z M9.5 2 L0.8 12 M11.5 4.5 L5.5 12" fill="none" stroke="#2f8be0" stroke-width="1" stroke-linejoin="round"/></g><g transform="translate(979.5,309.1)"><path d="M1 7.5 H13" stroke="#999" stroke-width="0.9"/><path d="M8 6.8 L10.5 3.6 L13 6.8 Z" fill="#44b26b"/><path d="M1.5 8.2 L4 11.4 L6.5 8.2 Z" fill="#d13438"/></g><g transform="translate(1000.7,309.1)"><rect x="1" y="0.8" width="5.4" height="5.4" fill="#3b78b8"/><rect x="7.8" y="0.8" width="5.4" height="5.4" fill="#d9674a"/><rect x="1" y="7.6" width="5.4" height="5.4" fill="#8fb4dc"/><rect x="7.8" y="7.6" width="5.4" height="5.4" fill="#5f9f86"/></g><circle cx="897" cy="335.8" r="0.9" fill="#555"/><circle cx="901.5" cy="335.8" r="0.9" fill="#555"/><circle cx="906" cy="335.8" r="0.9" fill="#555"/><path d="M890.6 349.6 H1019" stroke="#c8c6c4" stroke-width="1" stroke-dasharray="1.5 1.5"/><path d="M886 358.5 H1024" stroke="#e1dfdd" stroke-width="1"/></svg>
<div class="t" style="left:892.50px;top:105.80px;font-size:11.1px;color:#252423;font-weight:bold;">Visualisations</div>
<div class="t" style="left:892.50px;top:126.84px;font-size:8.7px;color:#3b3a39;font-weight:bold;">Générer un élément visuel</div>
<div class="t" style="left:862px;top:145px;width:23px;height:34px;"><div style="position:absolute;left:0;top:0;transform-origin:0 0;transform:translate(16px,-3px) rotate(90deg);font-size:10px;letter-spacing:0.45px;font-weight:bold;color:#252423;line-height:1;">Filtres</div></div>
<div class="t" style="left:895.20px;top:367.34px;font-size:8.7px;color:#3b3a39;font-weight:normal;">Analyser</div>
<div class="t" style="left:895.20px;top:413.27px;font-size:8.9px;color:#3b3a39;font-weight:normal;">Expliquer par</div>
<div class="t" style="left:895.50px;top:501.35px;font-size:8.8px;color:#3b3a39;font-weight:normal;">Info-bulles</div>
<div class="r" style="left:890px;top:382px;width:127px;height:20px;background:#ffffff;border:1px dotted #cbcbcb;box-sizing:border-box;"></div>
<div class="r" style="left:892px;top:384.2px;width:124px;height:16px;background:#e9e9e9;border:1px solid #d9d9d9;box-sizing:border-box;border-radius:2px;"></div>
<div class="t" style="left:895.50px;top:388.87px;font-size:8.9px;color:#252423;font-weight:normal;">CA_Net</div>
<svg class="s" style="left:992px;top:389.2px" width="22" height="8" viewBox="0 0 22 8"><path d="M0.5 1 L4.5 5 L8.5 1" fill="none" stroke="#555" stroke-width="1"/><path d="M14.2 0.8 L19.6 6.2 M19.6 0.8 L14.2 6.2" stroke="#444" stroke-width="1"/></svg>
<div class="r" style="left:890px;top:428px;width:127px;height:63px;background:#ffffff;border:1px dotted #cbcbcb;box-sizing:border-box;"></div>
<div class="r" style="left:892px;top:430.4px;width:124px;height:16px;background:#e9e9e9;border:1px solid #d9d9d9;box-sizing:border-box;border-radius:2px;"></div>
<div class="t" style="left:895.50px;top:435.07px;font-size:8.9px;color:#252423;font-weight:normal;">Ville</div>
<svg class="s" style="left:992px;top:435.4px" width="22" height="8" viewBox="0 0 22 8"><path d="M0.5 1 L4.5 5 L8.5 1" fill="none" stroke="#555" stroke-width="1"/><path d="M14.2 0.8 L19.6 6.2 M19.6 0.8 L14.2 6.2" stroke="#444" stroke-width="1"/></svg>
<div class="r" style="left:892px;top:448.8px;width:124px;height:16px;background:#e9e9e9;border:1px solid #d9d9d9;box-sizing:border-box;border-radius:2px;"></div>
<div class="t" style="left:895.50px;top:453.47px;font-size:8.9px;color:#252423;font-weight:normal;">catégorie</div>
<svg class="s" style="left:992px;top:453.8px" width="22" height="8" viewBox="0 0 22 8"><path d="M0.5 1 L4.5 5 L8.5 1" fill="none" stroke="#555" stroke-width="1"/><path d="M14.2 0.8 L19.6 6.2 M19.6 0.8 L14.2 6.2" stroke="#444" stroke-width="1"/></svg>
<div class="r" style="left:892px;top:467.3px;width:124px;height:16px;background:#e9e9e9;border:1px solid #d9d9d9;box-sizing:border-box;border-radius:2px;"></div>
<div class="t" style="left:895.50px;top:471.97px;font-size:8.9px;color:#252423;font-weight:normal;">Produit</div>
<svg class="s" style="left:992px;top:472.3px" width="22" height="8" viewBox="0 0 22 8"><path d="M0.5 1 L4.5 5 L8.5 1" fill="none" stroke="#555" stroke-width="1"/><path d="M14.2 0.8 L19.6 6.2 M19.6 0.8 L14.2 6.2" stroke="#444" stroke-width="1"/></svg>
<div class="r" style="left:890px;top:515px;width:127px;height:21px;background:#ffffff;border:1px dotted #cbcbcb;box-sizing:border-box;"></div>
<div class="t" style="left:897.20px;top:520.70px;font-size:9.1px;color:#3b3a39;font-weight:normal;">Ajouter des champs de don...</div>
<div class="r" style="left:1018.3px;top:360px;width:4.5px;height:173px;background:#8a8886;border-radius:2.2px;"></div>

</body></html>
